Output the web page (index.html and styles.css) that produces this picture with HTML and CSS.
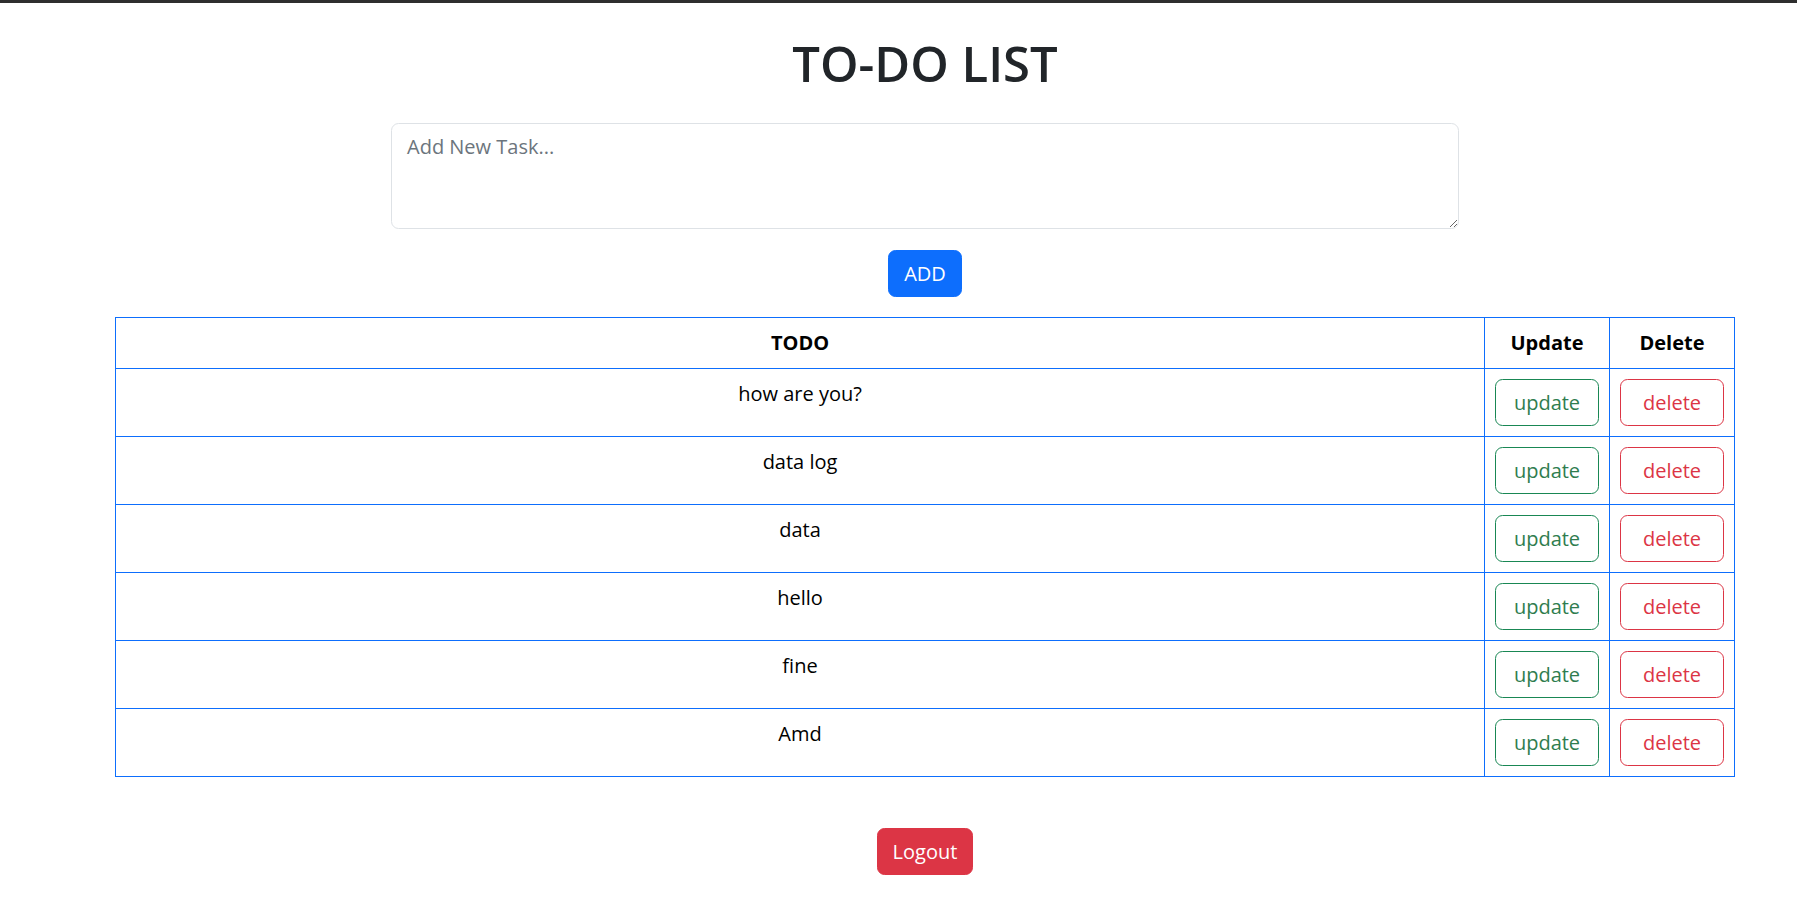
FILE: index.html
```html
<!DOCTYPE html>
<html lang="en">
<head>
<meta charset="utf-8">
<title>TO-DO LIST</title>
<link rel="stylesheet" href="styles.css">
</head>
<body>
<div class="topbar"></div>
<main class="page">
  <h1 class="title">TO-DO LIST</h1>
  <textarea class="task-input" rows="3" placeholder="Add New Task..."></textarea>
  <button class="btn btn-add">ADD</button>
  <table class="todo-table">
    <thead>
      <tr><th class="col-todo">TODO</th><th>Update</th><th>Delete</th></tr>
    </thead>
    <tbody>
      <tr><td class="col-todo">how are you?</td><td><button class="btn btn-update">update</button></td><td><button class="btn btn-delete">delete</button></td></tr>
      <tr><td class="col-todo">data log</td><td><button class="btn btn-update">update</button></td><td><button class="btn btn-delete">delete</button></td></tr>
      <tr><td class="col-todo">data</td><td><button class="btn btn-update">update</button></td><td><button class="btn btn-delete">delete</button></td></tr>
      <tr><td class="col-todo">hello</td><td><button class="btn btn-update">update</button></td><td><button class="btn btn-delete">delete</button></td></tr>
      <tr><td class="col-todo">fine</td><td><button class="btn btn-update">update</button></td><td><button class="btn btn-delete">delete</button></td></tr>
      <tr><td class="col-todo">Amd</td><td><button class="btn btn-update">update</button></td><td><button class="btn btn-delete">delete</button></td></tr>
    </tbody>
  </table>
  <button class="btn btn-logout">Logout</button>
</main>
</body>
</html>
```
FILE: styles.css
```css
html, body {
  margin: 0;
  padding: 0;
  background: #fff;
}
body {
  font-family: "Open Sans", "Noto Sans", sans-serif;
  font-size: 20px;
  line-height: 1.5;
  color: #212529;
}
.topbar {
  height: 3px;
  background: #2e2e2e;
}
.page {
  display: flex;
  flex-direction: column;
  align-items: center;
  padding-left: 53px;
}
.title {
  margin: 30px 0 30px;
  font-size: 49px;
  font-weight: 600;
  line-height: 60px;
  color: #212529;
}
.task-input {
  box-sizing: border-box;
  width: 1068px;
  height: 106px;
  padding: 7.5px 15px;
  font-family: inherit;
  font-size: 20px;
  line-height: 1.5;
  color: #212529;
  border: 1px solid #dee2e6;
  border-radius: 7.5px;
  resize: vertical;
  outline: none;
}
.task-input::placeholder {
  color: #6c757d;
}
.btn {
  box-sizing: border-box;
  font-family: inherit;
  font-size: 20px;
  line-height: 30px;
  padding: 7.5px 15px;
  border: 1px solid transparent;
  border-radius: 7.5px;
  background: transparent;
  cursor: pointer;
}
.btn-add {
  margin-top: 21px;
  background: #0d6efd;
  border-color: #0d6efd;
  color: #fff;
}
.todo-table {
  margin-top: 20px;
  width: 1620px;
  border-collapse: collapse;
  color: #000;
}
.todo-table th,
.todo-table td {
  border: 1px solid #0d6efd;
  padding: 10px;
  text-align: center;
  vertical-align: top;
  line-height: 30px;
}
.todo-table th {
  font-weight: 700;
}
.todo-table .col-todo {
  width: 100%;
}
.btn-update,
.btn-delete {
  width: 104px;
  padding-left: 0;
  padding-right: 0;
}
.btn-update {
  border-color: #198754;
  color: #2f7d4f;
}
.btn-delete {
  border-color: #dc3545;
  color: #dc3545;
}
.btn-logout {
  margin-top: 51px;
  background: #dc3545;
  border-color: #dc3545;
  color: #fff;
}
```
